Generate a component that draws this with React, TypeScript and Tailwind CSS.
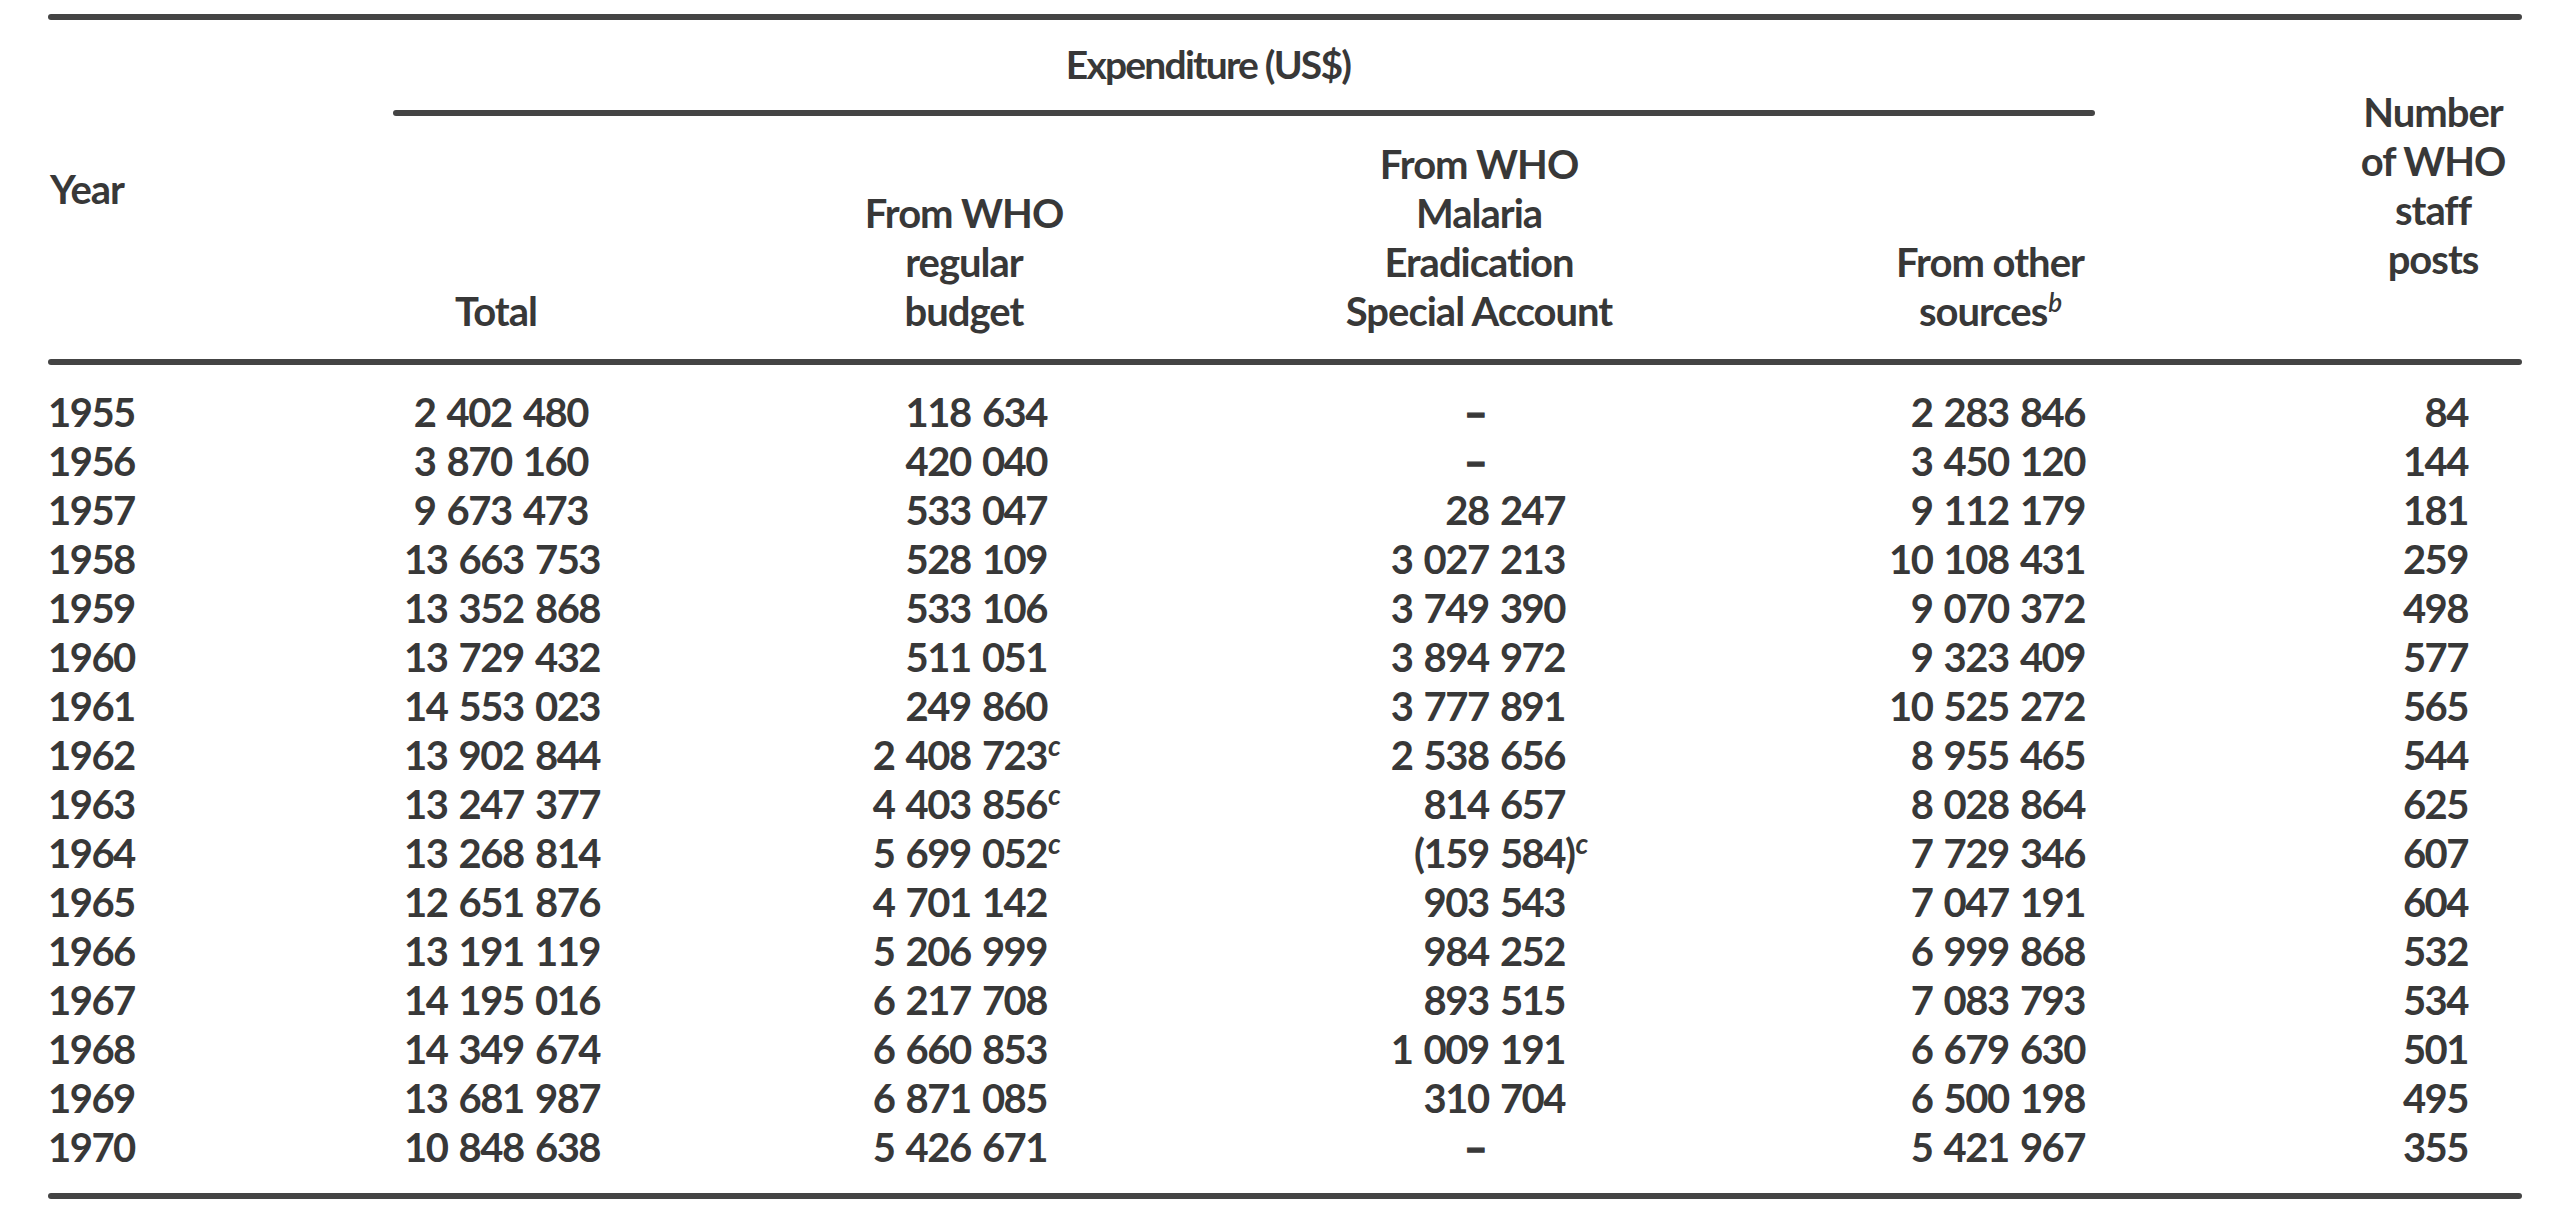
import React from "react";

type Row = [string, string, string, string, string, string];

const rows: Row[] = [
  ["1955", "2 402 480", "118 634", "–", "2 283 846", "84"],
  ["1956", "3 870 160", "420 040", "–", "3 450 120", "144"],
  ["1957", "9 673 473", "533 047", "28 247", "9 112 179", "181"],
  ["1958", "13 663 753", "528 109", "3 027 213", "10 108 431", "259"],
  ["1959", "13 352 868", "533 106", "3 749 390", "9 070 372", "498"],
  ["1960", "13 729 432", "511 051", "3 894 972", "9 323 409", "577"],
  ["1961", "14 553 023", "249 860", "3 777 891", "10 525 272", "565"],
  ["1962", "13 902 844", "2 408 723^", "2 538 656", "8 955 465", "544"],
  ["1963", "13 247 377", "4 403 856^", "814 657", "8 028 864", "625"],
  ["1964", "13 268 814", "5 699 052^", "(159 584)^", "7 729 346", "607"],
  ["1965", "12 651 876", "4 701 142", "903 543", "7 047 191", "604"],
  ["1966", "13 191 119", "5 206 999", "984 252", "6 999 868", "532"],
  ["1967", "14 195 016", "6 217 708", "893 515", "7 083 793", "534"],
  ["1968", "14 349 674", "6 660 853", "1 009 191", "6 679 630", "501"],
  ["1969", "13 681 987", "6 871 085", "310 704", "6 500 198", "495"],
  ["1970", "10 848 638", "5 426 671", "–", "5 421 967", "355"],
];

function Num({ v }: { v: string }) {
  if (v === "–") {
    return (
      <span className="mr-[79px] font-black [-webkit-text-stroke:1.3px_#383838]">–</span>
    );
  }
  if (v.endsWith("^")) {
    let base = v.slice(0, -1);
    let paren = "";
    if (base.endsWith(")")) {
      paren = ")";
      base = base.slice(0, -1);
    }
    return (
      <span>
        {base}
        <span className="inline-block w-0 whitespace-nowrap text-left">
          {paren}
          <span className="ml-[1px] text-[28px] leading-[0] align-[14px] italic">c</span>
        </span>
      </span>
    );
  }
  return <span>{v}</span>;
}

function Line({ children, cls = "" }: { children: React.ReactNode; cls?: string }) {
  return <div className={`h-[49px] leading-[49px] whitespace-nowrap ${cls}`}>{children}</div>;
}

function HeadCol({ lines, cls }: { lines: React.ReactNode[]; cls: string }) {
  return (
    <div className={`flex flex-col items-center ${cls}`}>
      {lines.map((l, i) => (
        <Line key={i}>{l}</Line>
      ))}
    </div>
  );
}

function Rule() {
  return <div className="h-[6px] w-full rounded-full bg-[#444444]" />;
}

export default function App() {
  return (
    <div className="min-h-[1220px] w-full bg-white pt-[14px] font-['Lato','Open_Sans',sans-serif] text-[40px] font-bold tracking-[-1px] text-[#383838]">
      <div className="ml-[48px] w-[2474px]">
        <Rule />
        {/* Header */}
        <div className="flex h-[339px]">
          <div className="flex w-[345px] items-center pl-[2px]">
            <Line>Year</Line>
          </div>
          <div className="flex w-[1702px] flex-col pt-[20px]">
            <div className="flex justify-center pr-[72px]">
              <Line cls="text-[39px] tracking-[-1.8px]">Expenditure (US$)</Line>
            </div>
            <div className="mt-[21px]">
              <Rule />
            </div>
            <div className="flex flex-1 items-end pb-[23px]">
              <HeadCol cls="ml-[11px] w-[184px]" lines={["Total"]} />
              <HeadCol cls="ml-[293px] w-[166px]" lines={["From WHO", "regular", "budget"]} />
              <HeadCol
                cls="ml-[346px] w-[172px]"
                lines={["From WHO", "Malaria", "Eradication", "Special Account"]}
              />
              <HeadCol
                cls="ml-[330px] w-[190px]"
                lines={[
                  "From other",
                  <span>
                    sources
                    <span className="ml-[1px] text-[26px] font-semibold leading-[0] align-[14px] italic">b</span>
                  </span>,
                ]}
              />
            </div>
          </div>
          <div className="flex flex-1 items-center justify-end pb-[7px] pr-[58px]">
            <HeadCol cls="w-[62px]" lines={["Number", "of WHO", "staff", "posts"]} />
          </div>
        </div>
        <Rule />
        {/* Body */}
        <div className="pt-[23px] tabular-nums tracking-[-1.5px] [word-spacing:3px]">
          {rows.map((r) => (
            <div
              key={r[0]}
              className="grid h-[49px] grid-cols-[356px_184px_459px_518px_520px_383px] whitespace-nowrap leading-[49px]"
            >
              <div>{r[0]}</div>
              <div className="text-right">
                <Num v={r[1]} />
              </div>
              <div className="text-right">
                <Num v={r[2]} />
              </div>
              <div className="text-right">
                <Num v={r[3]} />
              </div>
              <div className="text-right">
                <Num v={r[4]} />
              </div>
              <div className="text-right">
                <Num v={r[5]} />
              </div>
            </div>
          ))}
        </div>
        <div className="mt-[21px]">
          <Rule />
        </div>
      </div>
    </div>
  );
}
